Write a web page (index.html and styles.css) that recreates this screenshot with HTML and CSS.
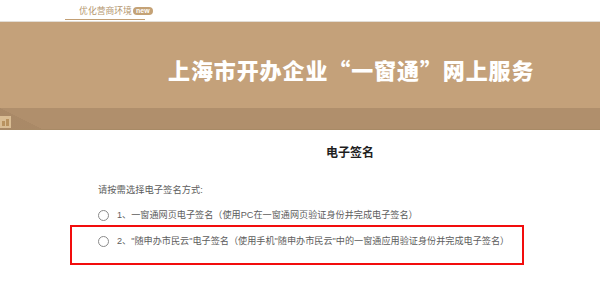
FILE: index.html
```html
<!DOCTYPE html>
<html lang="zh-CN">
<head>
<meta charset="utf-8">
<title>电子签名</title>
<link rel="stylesheet" href="styles.css">
</head>
<body>
<header class="topnav">
  <a class="nav-item">优化营商环境<span class="badge">new</span></a>
</header>
<section class="banner">
  <div class="banner-main">
    <h1 class="banner-title">上海市开办企业“一窗通”网上服务</h1>
  </div>
  <div class="banner-band">
    <span class="band-icon">
      <svg width="9" height="8" viewBox="0 0 9 8"><rect x="1" y="3" width="3" height="5" fill="#b8925f"/><rect x="5" y="1" width="3" height="7" fill="#b8925f"/></svg>
    </span>
  </div>
</section>
<main class="content">
  <h2 class="page-title">电子签名</h2>
  <p class="prompt">请按需选择电子签名方式:</p>
  <label class="option"><span class="radio"></span><span class="option-text">1、一窗通网页电子签名（使用PC在一窗通网页验证身份并完成电子签名）</span></label>
  <label class="option"><span class="radio"></span><span class="option-text">2、"随申办市民云"电子签名（使用手机"随申办市民云"中的一窗通应用验证身份并完成电子签名）</span></label>
</main>
<div class="highlight"></div>
</body>
</html>
```
FILE: styles.css
```css
html, body {
  margin: 0;
  padding: 0;
  background: #fff;
}
body {
  position: relative;
  width: 600px;
  height: 285px;
  overflow: hidden;
  font-family: "Liberation Sans", "Noto Sans CJK SC", sans-serif;
}
.topnav {
  height: 21px;
  display: flex;
  padding-left: 65px;
  border-bottom: 1px solid #e2ddd6;
}
.nav-item {
  position: relative;
  width: 80px;
  height: 20px;
  display: flex;
  align-items: center;
  justify-content: center;
  padding: 2px 0 0 1px;
  box-sizing: border-box;
  font-family: "Noto Sans CJK SC", sans-serif;
  font-size: 8.8px;
  color: #b4966f;
  border-bottom: 1px solid #c29f74;
}
.badge {
  position: absolute;
  left: 68px;
  top: 7px;
  padding: 0 3px;
  height: 8px;
  line-height: 8px;
  border-radius: 4px;
  background: #c4a276;
  color: #fff;
  font-family: "Liberation Sans", sans-serif;
  font-size: 7px;
  font-weight: bold;
}
.banner {
  background: #c4a17a;
}
.banner-main {
  height: 86px;
  display: flex;
  align-items: center;
  padding-left: 168px;
  box-sizing: border-box;
  padding-top: 8px;
}
.banner-title {
  margin: 0;
  font-family: "Noto Sans CJK SC", sans-serif;
  font-weight: 900;
  font-size: 22px;
  letter-spacing: 0.9px;
  color: #fff;
}
.banner-band {
  height: 21px;
  border-bottom: 1px solid #a88a66;
  background:
    linear-gradient(to top right, rgba(150, 120, 88, 0.25) 50%, transparent 50.5%) left bottom / 42px 21px no-repeat,
    #b08f6c;
  display: flex;
  align-items: flex-end;
}
.band-icon {
  width: 11px;
  height: 12px;
  margin-bottom: 1px;
  background: #d9bd94;
  display: flex;
  align-items: center;
  justify-content: center;
}
.content {
  width: 504px;
  margin-left: 98px;
  color: #5d5d5d;
}
.page-title {
  margin: 0;
  padding-top: 14px;
  text-align: center;
  font-family: "Noto Sans CJK SC", sans-serif;
  font-size: 12px;
  font-weight: bold;
  color: #1e1e1e;
  line-height: 16px;
}
.prompt {
  margin: 23px 0 0;
  font-size: 9.3px;
  line-height: 14px;
}
.option {
  display: flex;
  align-items: center;
  gap: 8px;
  margin-top: 11px;
  font-size: 9.15px;
  line-height: 14px;
}
.option + .option {
  margin-top: 12px;
}
.radio {
  width: 9px;
  height: 9px;
  border: 1px solid #8a8a8a;
  border-radius: 50%;
  background: #fff;
  flex: none;
}
.highlight {
  position: absolute;
  left: 70px;
  top: 225px;
  width: 450px;
  height: 36px;
  border: 2px solid #f20d0d;
}
```
